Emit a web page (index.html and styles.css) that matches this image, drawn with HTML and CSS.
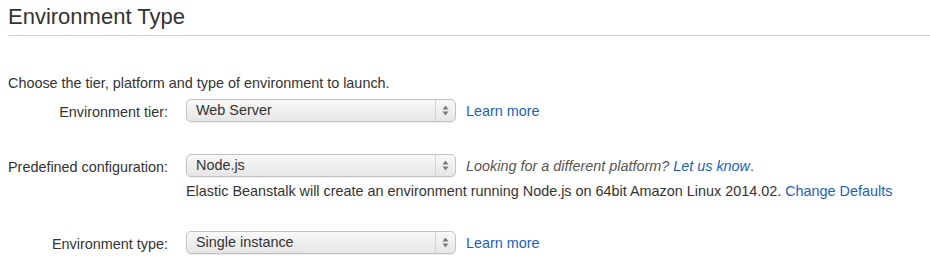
FILE: index.html
```html
<!DOCTYPE html>
<html lang="en">
<head>
    <meta charset="UTF-8">
    <meta name="viewport" content="width=device-width, initial-scale=1.0">
    <title>Environment Type</title>
    <link rel="stylesheet" href="styles.css">
</head>
<body>

    <header>
        <h1>Environment Type</h1>
    </header>

    <p class="intro">Choose the tier, platform and type of environment to launch.</p>

    <div class="campo">
        <label>Environment tier:</label>
        <div class="control">
            <div class="linea">
                <div class="selector">
                    <span class="valor">Web Server</span>
                    <span class="flechas"><svg width="7" height="11" viewBox="0 0 7 11"><path d="M3.5 0.5 L6.5 4.5 L0.5 4.5 Z M0.5 6.5 L6.5 6.5 L3.5 10.5 Z" fill="#7a7a7a"/></svg></span>
                </div>
                <a href="#">Learn more</a>
            </div>
        </div>
    </div>

    <div class="campo">
        <label>Predefined configuration:</label>
        <div class="control">
            <div class="linea">
                <div class="selector">
                    <span class="valor">Node.js</span>
                    <span class="flechas"><svg width="7" height="11" viewBox="0 0 7 11"><path d="M3.5 0.5 L6.5 4.5 L0.5 4.5 Z M0.5 6.5 L6.5 6.5 L3.5 10.5 Z" fill="#7a7a7a"/></svg></span>
                </div>
                <span class="nota"><em>Looking for a different platform? <a href="#">Let us know</a></em>.</span>
            </div>
            <p class="ayuda">Elastic Beanstalk will create an environment running Node.js on 64bit Amazon Linux 2014.02. <a href="#">Change Defaults</a></p>
        </div>
    </div>

    <div class="campo">
        <label>Environment type:</label>
        <div class="control">
            <div class="linea">
                <div class="selector">
                    <span class="valor">Single instance</span>
                    <span class="flechas"><svg width="7" height="11" viewBox="0 0 7 11"><path d="M3.5 0.5 L6.5 4.5 L0.5 4.5 Z M0.5 6.5 L6.5 6.5 L3.5 10.5 Z" fill="#7a7a7a"/></svg></span>
                </div>
                <a href="#">Learn more</a>
            </div>
        </div>
    </div>

</body>
</html>
```

FILE: styles.css
```css
body {
    font-family: "Liberation Sans", Arial, sans-serif;
    font-size: 14.4px;
    color: #333;
    margin: 0 0 0 8px;
    background-color: #fff;
}

header {
    border-bottom: 1px solid #cccccc;
    padding-top: 4px;
    height: 31px;
}

h1 {
    margin: 0;
    font-size: 22px;
    font-weight: normal;
    line-height: 26px;
    color: #333;
}

.intro {
    margin: 39px 0 0 0;
    line-height: 17px;
}

a {
    color: #1b5fbf;
    text-decoration: none;
}

.campo {
    display: flex;
    gap: 18px;
    margin-top: 7px;
}

.campo + .campo {
    margin-top: 31px;
}

.campo label {
    width: 160px;
    text-align: right;
    line-height: 22px;
    padding-top: 2px;
}

.linea {
    display: flex;
    align-items: center;
    gap: 10px;
}

.selector {
    display: flex;
    width: 268px;
    height: 21px;
    border: 1px solid #c3c3c3;
    border-radius: 5px;
    background: linear-gradient(#f8f8f8, #e6e6e6);
    box-shadow: 0 1px 1px rgba(0, 0, 0, 0.08);
}

.valor {
    flex: 1;
    padding-left: 9px;
    line-height: 21px;
    color: #333;
}

.flechas {
    width: 19px;
    border-left: 1px solid #d3d3d3;
    display: flex;
    align-items: center;
    justify-content: center;
}

.nota {
    color: #555;
}

.ayuda {
    margin: 6px 0 0 0;
    line-height: 17px;
}
```
